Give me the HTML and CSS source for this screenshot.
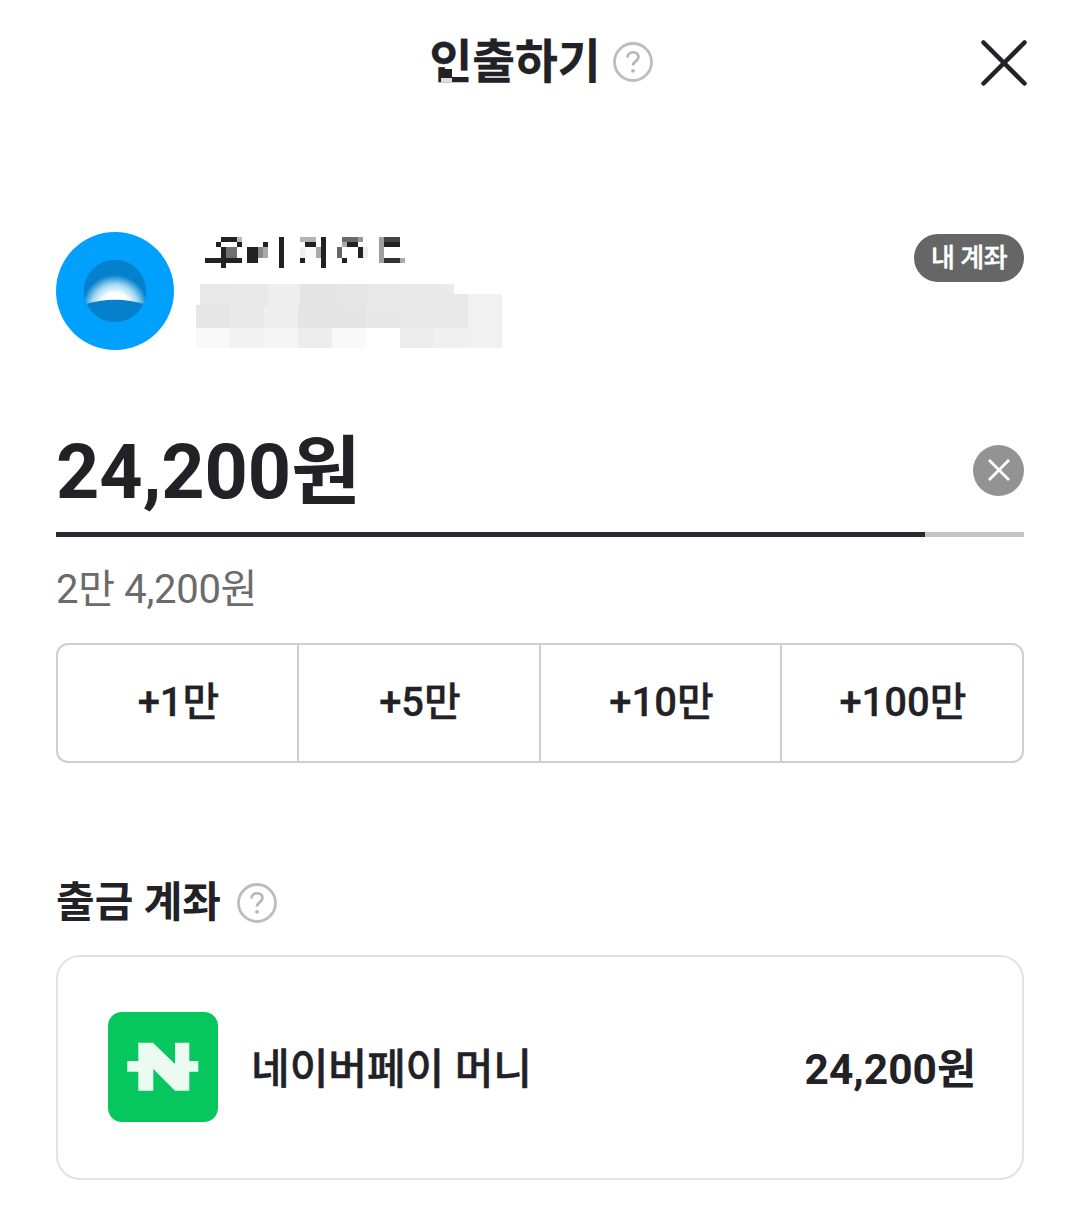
FILE: index.html
```html
<!DOCTYPE html>
<html lang="ko">
<head>
<meta charset="utf-8">
<title>인출하기</title>
<link rel="stylesheet" href="styles.css">
</head>
<body>
<header class="header">
  <div class="title-wrap">
    <h1 class="title">인출하기</h1>
    <svg class="help help-lg" viewBox="0 0 40 40"><circle cx="20" cy="20" r="18.500" fill="none" stroke="#bdbdbd" stroke-width="2.800"/><path d="M14.500 15.500c0-3.200 2.400-5.300 5.600-5.300 3.100 0 5.400 1.900 5.400 4.800 0 4-5.500 4.300-5.500 8.500" fill="none" stroke="#b5b5b5" stroke-width="2.600"/><circle cx="20" cy="28.800" r="1.900" fill="#b5b5b5"/></svg>
  </div>
  <button class="close" aria-label="닫기">
    <svg viewBox="0 0 46 46"><path d="M2.500 2.500 43.500 43.500M43.500 2.500 2.500 43.500" stroke="#222228" stroke-width="4.500" stroke-linecap="round"/></svg>
  </button>
</header>

<main class="content">
  <section class="account">
    <svg class="avatar" viewBox="0 0 118 118">
      <defs>
        <clipPath id="inner"><circle cx="59" cy="59" r="31"/></clipPath>
        <radialGradient id="dome" gradientUnits="userSpaceOnUse" cx="59" cy="76" r="1" gradientTransform="translate(59 76) scale(33 33) translate(-59 -76)">
          <stop offset="0.45" stop-color="#ffffff"/>
          <stop offset="0.72" stop-color="#9fd8f3"/>
          <stop offset="1" stop-color="#0580cc"/>
        </radialGradient>
      </defs>
      <circle cx="59" cy="59" r="59" fill="#00a0ff"/>
      <g clip-path="url(#inner)">
        <rect x="28" y="28" width="62" height="62" fill="#0580cc"/>
        <rect x="28" y="28" width="62" height="46" fill="url(#dome)"/>
        <path d="M28 72.500Q59 63 90 72.500V92H28Z" fill="#0580cc"/>
      </g>
    </svg>
    <svg class="mosaic" viewBox="0 0 306 118" role="img" aria-label="가려진 계좌 정보">
      <g fill="#222">
        <rect x="25" y="5" width="16" height="5"/><rect x="20" y="10" width="5" height="5"/><rect x="41" y="10" width="5" height="5"/>
        <rect x="25" y="15" width="5" height="11"/><rect x="9" y="26" width="37" height="5"/><rect x="25" y="31" width="5" height="5"/>
        <rect x="51" y="15" width="11" height="16"/><rect x="67" y="10" width="5" height="5"/><rect x="83" y="5" width="5" height="31"/>
        <rect x="109" y="10" width="11" height="5"/><rect x="104" y="26" width="5" height="5"/><rect x="125" y="5" width="5" height="31"/>
        <rect x="151" y="10" width="11" height="5"/><rect x="162" y="15" width="5" height="11"/><rect x="146" y="26" width="5" height="5"/>
        <rect x="188" y="10" width="16" height="5"/>
      </g>
      <rect x="41" y="5" width="5" height="5" fill="#bbb"/><rect x="30" y="15" width="11" height="11" fill="#707070"/>
      <rect x="62" y="15" width="5" height="11" fill="#888"/><rect x="67" y="15" width="5" height="11" fill="#aaa"/>
      <rect x="104" y="5" width="16" height="5" fill="#b5b5b5"/><rect x="104" y="15" width="5" height="11" fill="#eee"/>
      <rect x="109" y="15" width="11" height="11" fill="#fafafa"/><rect x="120" y="15" width="5" height="11" fill="#aaa"/>
      <rect x="146" y="5" width="16" height="5" fill="#6a6a6a"/><rect x="162" y="5" width="5" height="5" fill="#999"/>
      <rect x="146" y="10" width="5" height="5" fill="#aaa"/><rect x="141" y="15" width="5" height="11" fill="#666"/>
      <rect x="167" y="15" width="5" height="11" fill="#eee"/><rect x="183" y="5" width="5" height="26" fill="#a0a0a0"/>
      <rect x="188" y="5" width="16" height="5" fill="#444"/><rect x="188" y="26" width="16" height="5" fill="#333"/>
      <rect x="204" y="26" width="5" height="5" fill="#aaa"/>

      <rect x="4" y="52" width="37" height="21" fill="#e8e8e8"/><rect x="41" y="52" width="31" height="21" fill="#e9e9e9"/>
      <rect x="72" y="52" width="32" height="21" fill="#eee"/><rect x="104" y="52" width="42" height="21" fill="#e4e4e4"/>
      <rect x="146" y="52" width="26" height="21" fill="#e5e5e5"/><rect x="172" y="52" width="32" height="21" fill="#e8e8e8"/>
      <rect x="204" y="52" width="42" height="21" fill="#e9e9e9"/><rect x="246" y="52" width="12" height="21" fill="#ebebeb"/>
      <rect x="0" y="73" width="34" height="23" fill="#e6e6e6"/><rect x="34" y="73" width="34" height="23" fill="#e9e9e9"/>
      <rect x="68" y="73" width="34" height="23" fill="#eee"/><rect x="102" y="73" width="68" height="23" fill="#e4e4e4"/>
      <rect x="170" y="73" width="34" height="23" fill="#e7e7e7"/><rect x="204" y="73" width="34" height="23" fill="#e9e9e9"/>
      <rect x="238" y="62" width="34" height="34" fill="#e8e8e8"/><rect x="272" y="62" width="34" height="54" fill="#f1f1f1"/>
      <rect x="0" y="96" width="34" height="20" fill="#f8f8f8"/><rect x="34" y="96" width="34" height="20" fill="#f2f2f2"/>
      <rect x="68" y="96" width="34" height="20" fill="#f5f5f5"/><rect x="102" y="96" width="34" height="20" fill="#ededed"/>
      <rect x="136" y="96" width="34" height="20" fill="#f9f9f9"/><rect x="204" y="96" width="34" height="20" fill="#ececec"/>
      <rect x="238" y="96" width="34" height="20" fill="#f0f0f0"/>
    </svg>
    <span class="badge">내 계좌</span>
  </section>

  <section class="amount">
    <div class="amount-row">
      <span class="amount-value">24,200원</span>
      <button class="clear" aria-label="지우기">
        <svg viewBox="0 0 24 24"><path d="M2 2 22 22M22 2 2 22" stroke="#fff" stroke-width="2.800"/></svg>
      </button>
    </div>
    <div class="track"><div class="track-fill"></div></div>
    <p class="amount-hint">2만 4,200원</p>
    <div class="quick">
      <button class="quick-btn">+1만</button>
      <button class="quick-btn">+5만</button>
      <button class="quick-btn">+10만</button>
      <button class="quick-btn">+100만</button>
    </div>
  </section>

  <section class="source">
    <div class="source-head">
      <h2 class="source-title">출금 계좌</h2>
      <svg class="help help-sm" viewBox="0 0 40 40"><circle cx="20" cy="20" r="18.500" fill="none" stroke="#bdbdbd" stroke-width="2.800"/><path d="M14.500 15.500c0-3.200 2.400-5.300 5.600-5.300 3.100 0 5.400 1.900 5.400 4.800 0 4-5.500 4.300-5.500 8.500" fill="none" stroke="#b5b5b5" stroke-width="2.600"/><circle cx="20" cy="28.800" r="1.900" fill="#b5b5b5"/></svg>
    </div>
    <div class="card">
      <svg class="pay-logo" viewBox="0 0 110 110">
        <rect width="110" height="110" rx="14" fill="#05c75d"/>
        <path d="M30.300 30.700H45L67 52V30.700H81.300V49H90.300V59.700H81.300V78.700H67L45.300 57V78.700H30.300V59.700H19.300V49H30.300Z" fill="#ecfbf2"/>
      </svg>
      <span class="pay-name">네이버페이 머니</span>
      <span class="pay-amount">24,200원</span>
    </div>
  </section>
</main>
</body>
</html>
```
FILE: styles.css
```css
* { box-sizing: border-box; }
html, body { margin: 0; padding: 0; background: #fff; }
body {
  width: 1080px;
  height: 1205px;
  overflow: hidden;
  font-family: Roboto, "Noto Sans CJK KR", sans-serif;
  color: #212126;
}
h1, h2, p { margin: 0; }
button { font: inherit; color: inherit; background: none; border: 0; padding: 0; }

.header {
  height: 124px;
  display: flex;
  align-items: center;
  justify-content: center;
  position: relative;
}
.title-wrap { display: flex; align-items: center; gap: 12px; margin-left: 2px; }
.title {
  font-size: 46.500px;
  font-weight: 700;
  line-height: 1;
  position: relative;
  -webkit-text-stroke: 0.3px #212126;
}
/* mosaic patch that covers part of the first syllable */
.title::after {
  content: "";
  position: absolute;
  left: 12px;
  top: 30px;
  width: 11px;
  height: 13px;
  background: linear-gradient(#222 0 9px, #ddd 9px);
}
.help { display: block; flex: none; }
.help-lg { width: 40px; height: 40px; }
.help-sm { width: 40px; height: 40px; }
.close {
  position: absolute;
  left: 981px;
  top: 40px;
  width: 46px;
  height: 46px;
}
.close svg { display: block; width: 46px; height: 46px; }

.content { padding: 0 56px; }

.account {
  margin-top: 108px;
  display: flex;
  align-items: flex-start;
  height: 118px;
}
.avatar { width: 118px; height: 118px; flex: none; }
.mosaic { width: 306px; height: 118px; margin-left: 22px; flex: none; }
.badge {
  margin-left: auto;
  margin-top: 2px;
  width: 110px;
  height: 48px;
  border-radius: 24px;
  background: #666;
  color: #fff;
  font-size: 26px;
  font-weight: 500;
  -webkit-text-stroke: 0.4px #fff;
  display: flex;
  align-items: center;
  justify-content: center;
  letter-spacing: -0.5px;
  padding-bottom: 5px;
}

.amount { margin-top: 70px; }
.amount-row {
  height: 112px;
  display: flex;
  align-items: center;
  justify-content: space-between;
  padding-bottom: 12px;
}
.amount-value { font-size: 75.500px; font-weight: 700; line-height: 1; position: relative; top: 3px; }
.clear {
  width: 51px;
  height: 51px;
  border-radius: 50%;
  background: #939393;
  display: flex;
  align-items: center;
  justify-content: center;
}
.clear svg { width: 24px; height: 24px; display: block; }
.track { height: 5px; background: #c4c4c4; }
.track-fill { height: 100%; width: 869px; background: #2a2a32; }
.amount-hint {
  margin-top: 29px;
  height: 47px;
  line-height: 47px;
  font-size: 40px;
  color: #6b6b6b;
  letter-spacing: -0.3px;
}
.quick {
  margin-top: 30px;
  height: 120px;
  display: grid;
  grid-template-columns: 241px 242px 241px 240px;
  border: 2px solid #cfcfcf;
  border-radius: 12px;
  overflow: hidden;
}
.quick-btn {
  font-size: 40px;
  font-weight: 500;
  border-right: 2px solid #cfcfcf;
  padding: 0 0 8px 2px;
  -webkit-text-stroke: 0.3px #212126;
}
.quick-btn:last-child { border-right: 0; }

.source { margin-top: 114px; }
.source-head { display: flex; align-items: center; gap: 16px; height: 52px; }
.source-title { font-size: 42px; font-weight: 700; line-height: 1; }
.card {
  margin-top: 26px;
  height: 225px;
  border: 2px solid #e3e3e3;
  border-radius: 24px;
  padding: 0 46px 2px 50px;
  display: flex;
  align-items: center;
}
.pay-logo { width: 110px; height: 110px; flex: none; }
.pay-name {
  margin: 0 0 2px 33px;
  font-size: 42px;
  font-weight: 500;
  -webkit-text-stroke: 0.5px #212126;
}
.pay-amount { margin: 0 0 2px auto; font-size: 42.500px; font-weight: 700; }
```
